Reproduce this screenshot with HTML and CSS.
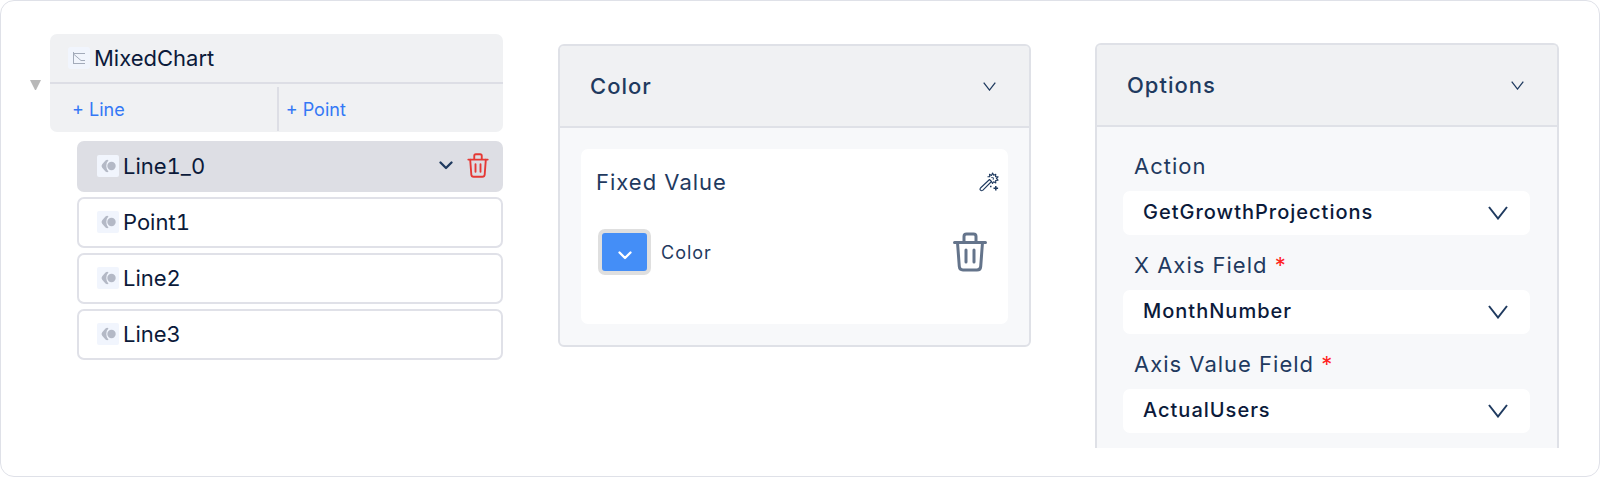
FILE: index.html
```
<!DOCTYPE html>
<html lang="en">
<head>
    <meta charset="UTF-8">
    <meta name="viewport" content="width=device-width, initial-scale=1.0">
    <title>Mixed Chart Settings</title>
    <link rel="stylesheet" href="styles.css">
</head>
<body>
    <!-- shared icons -->
    <svg class="icon-defs" aria-hidden="true">
        <symbol id="icon-series" viewBox="0 0 22 22">
            <path d="M11.500 5.200Q10 4.300 8.500 5.600L5.200 9.200Q3.800 11 5.200 12.800L8.500 16.400Q10 17.700 11.500 16.800Q9.300 14.500 9.300 11T11.500 5.200z" fill="#b4b9c6"/>
            <circle cx="14.500" cy="11" r="4.200" fill="#b4b9c6"/>
        </symbol>
        <symbol id="icon-chevron" viewBox="0 0 20 14">
            <path d="M1 1l9 11.500L19 1" fill="none" stroke="currentColor" stroke-width="2"/>
        </symbol>
        <symbol id="icon-chevron-round" viewBox="0 0 14 9">
            <path d="M1.500 1.500 7 7l5.500-5.500" fill="none" stroke="currentColor" stroke-width="2.300" stroke-linecap="round" stroke-linejoin="round"/>
        </symbol>
        <symbol id="icon-trash" viewBox="0 0 34 40">
            <path d="M1.500 10.500h31M11 10V4.500Q11 2 13.500 2h7Q23 2 23 4.500V10M4.500 10.500l1.800 24Q6.600 38 10 38h14q3.400 0 3.700-3.500L29.500 10.500M13 18v12M21 18v12" fill="none" stroke="currentColor" stroke-width="3" stroke-linecap="round"/>
        </symbol>
    </svg>

    <main class="frame">
        <section class="tree">
            <button class="toggle" aria-label="Collapse"><span class="toggle-arrow"></span></button>
            <div class="tree-content">
                <div class="chart-card">
                    <div class="chart-title">
                        <svg class="icon-box" viewBox="0 0 22 22">
                            <rect width="22" height="22" rx="2" fill="#f1f5fd"/>
                            <path d="M5.500 5v12M5 6.500h12M5 16.500h12M5.500 7l7.500 6.500h4" fill="none" stroke="#a3abba" stroke-width="1"/>
                        </svg>
                        <span>MixedChart</span>
                    </div>
                    <div class="chart-actions">
                        <button class="add-button">+ Line</button>
                        <button class="add-button">+ Point</button>
                    </div>
                </div>
                <ul class="series-list">
                    <li class="series selected">
                        <svg class="icon-box icon-series"><use href="#icon-series"/></svg>
                        <span class="series-name">Line1_0</span>
                        <button class="icon-button" aria-label="More"><svg class="series-chevron"><use href="#icon-chevron-round"/></svg></button>
                        <button class="icon-button delete" aria-label="Delete Line1_0"><svg class="series-trash"><use href="#icon-trash"/></svg></button>
                    </li>
                    <li class="series">
                        <svg class="icon-box icon-series"><use href="#icon-series"/></svg>
                        <span class="series-name">Point1</span>
                    </li>
                    <li class="series">
                        <svg class="icon-box icon-series"><use href="#icon-series"/></svg>
                        <span class="series-name">Line2</span>
                    </li>
                    <li class="series">
                        <svg class="icon-box icon-series"><use href="#icon-series"/></svg>
                        <span class="series-name">Line3</span>
                    </li>
                </ul>
            </div>
        </section>

        <section class="panel color-panel">
            <header class="panel-header">
                <h2>Color</h2>
                <button class="icon-button" aria-label="Collapse Color"><svg class="header-chevron"><use href="#icon-chevron"/></svg></button>
            </header>
            <div class="panel-body">
                <div class="value-card">
                    <div class="value-header">
                        <h3>Fixed Value</h3>
                        <button class="icon-button" aria-label="Edit expression">
                            <svg class="wand" viewBox="0 0 20 20" fill="none" stroke="currentColor" stroke-linejoin="round">
                                <path d="M10.500 7.500 1.500 16q-1 1.200 0 2.200t2.200.2L12.500 9.500z" stroke-width="1.100"/>
                                <path d="M8.500 4.800l2.300-.2-.3-2.300 2 1.100L13.600 1l1.100 2.300 2.100-1-.3 2.300 2.600.3-1.700 1.600 1.700 1.700-2.500.3.200 2.400-2.100-1.100-1.200 1.700-1-2" stroke-width="1.100"/>
                                <path d="M12.300 5.500l2.200.3-.3 2" stroke-width=".9"/>
                                <path d="M16.800 14v4.500M14.500 16.200h4.600" stroke-width="1.500"/>
                                <path d="M11 14.500h1.500" stroke-width="1.300"/>
                            </svg>
                        </button>
                    </div>
                    <div class="value-row">
                        <button class="swatch" id="swatch" aria-labelledby="swatch-label"><svg class="swatch-chevron"><use href="#icon-chevron-round"/></svg></button>
                        <label class="swatch-label" id="swatch-label" for="swatch">Color</label>
                        <button class="icon-button" aria-label="Delete color"><svg class="value-trash"><use href="#icon-trash"/></svg></button>
                    </div>
                </div>
            </div>
        </section>

        <section class="panel options-panel">
            <header class="panel-header">
                <h2>Options</h2>
                <button class="icon-button" aria-label="Collapse Options"><svg class="header-chevron"><use href="#icon-chevron"/></svg></button>
            </header>
            <form class="options-form">
                <div class="field">
                    <label for="action">Action</label>
                    <div class="select-box">
                        <select id="action"><option>GetGrowthProjections</option></select>
                        <svg class="select-chevron"><use href="#icon-chevron"/></svg>
                    </div>
                </div>
                <div class="field">
                    <label for="x-axis">X Axis Field <span class="required">*</span></label>
                    <div class="select-box">
                        <select id="x-axis"><option>MonthNumber</option></select>
                        <svg class="select-chevron"><use href="#icon-chevron"/></svg>
                    </div>
                </div>
                <div class="field">
                    <label for="axis-value">Axis Value Field <span class="required">*</span></label>
                    <div class="select-box">
                        <select id="axis-value"><option>ActualUsers</option></select>
                        <svg class="select-chevron"><use href="#icon-chevron"/></svg>
                    </div>
                </div>
            </form>
        </section>
    </main>
</body>
</html>
```
FILE: styles.css
```
* {
    box-sizing: border-box;
}

body {
    margin: 0;
    background: white;
    color: #0b1a3a;
    font-family: Inter, sans-serif;
    font-size: 22px;
}

h2, h3, ul {
    margin: 0;
    padding: 0;
    font-weight: 400;
    font-size: 22px;
}

button, select {
    font-family: inherit;
    color: inherit;
    border: none;
    background: none;
    padding: 0;
    cursor: pointer;
}

svg {
    display: block;
    flex-shrink: 0;
}

.icon-defs {
    display: none;
}

.frame {
    display: grid;
    grid-template-columns: repeat(3, 1fr);
    align-items: start;
    gap: 55px;
    min-height: 100vh;
    padding: 33px 40px 28px 29px;
    border: 1px solid #dfe1e8;
    border-radius: 14px;
}

/* component tree */

.tree {
    display: flex;
    align-items: flex-start;
    gap: 9px;
}

.toggle {
    margin-top: 46px;
}

.toggle-arrow {
    display: block;
    border: solid transparent;
    border-width: 10px 5px 0;
    border-top-color: #b8b8b8;
    width: 11px;
}

.tree-content {
    flex: 1;
}

.chart-card {
    background: #f0f1f3;
    border-radius: 7px;
}

.chart-title {
    display: flex;
    align-items: center;
    gap: 4px;
    height: 50px;
    padding-left: 18px;
    border-bottom: 2px solid #dddee5;
}

.icon-box {
    width: 22px;
    height: 22px;
    border-radius: 2px;
}

.chart-actions {
    display: grid;
    grid-template-columns: 51fr 50fr;
    padding: 3px 0 1px;
}

.add-button {
    height: 44px;
    padding-left: 7px;
    color: #3478f6;
    font-size: 18px;
    text-align: left;
}

.add-button:first-child {
    padding-left: 22px;
    border-right: 2px solid #dddee5;
}

.series-list {
    display: flex;
    flex-direction: column;
    gap: 5px;
    margin: 9px 0 0 27px;
    list-style: none;
}

.series {
    display: flex;
    align-items: center;
    gap: 4px;
    height: 51px;
    padding: 0 12px 2px 18px;
    border: 2px solid #e0e1e8;
    border-radius: 7px;
    font-feature-settings: "tnum";
}

.series.selected {
    background: #dddee4;
    border-color: #dddee4;
}

.series-name {
    flex: 1;
}

.icon-series {
    background: #f1f5fd;
}

.series-chevron {
    width: 14px;
    height: 9px;
    margin-right: 10px;
    color: #1f3a5f;
}

.series-trash {
    width: 22px;
    height: 25px;
}

.delete {
    color: #e53935;
}

/* settings panels */

.panel {
    border: 2px solid #dfe1e7;
    border-radius: 6px;
    background: #f7f8fa;
    color: #1f3a5f;
    letter-spacing: 1px;
}

.color-panel {
    margin-top: 10px;
}

.options-panel {
    margin: 9px 0 0 9px;
    border-bottom: none;
    border-radius: 6px 6px 0 0;
}

.panel-header {
    display: flex;
    align-items: center;
    justify-content: space-between;
    height: 82px;
    padding: 0 33px 0 30px;
    border-bottom: 2px solid #dfe1e7;
    border-radius: 4px 4px 0 0;
    background: #f0f1f3;
}

.panel-header h2 {
    font-weight: 450;
}

.header-chevron {
    width: 13px;
    height: 9px;
}

.panel-body {
    padding: 21px;
}

.value-card {
    height: 175px;
    padding: 15px 9px 0 15px;
    border-radius: 7px;
    background: white;
}

.value-header {
    display: flex;
    align-items: center;
    justify-content: space-between;
    height: 36px;
}

.wand {
    width: 20px;
    height: 20px;
}

.value-row {
    display: flex;
    align-items: center;
    margin-top: 29px;
    padding: 0 12px 0 2px;
}

.swatch {
    display: flex;
    align-items: center;
    justify-content: center;
    width: 53px;
    height: 46px;
    padding-top: 6px;
    border: 4px solid #dfdfdf;
    border-radius: 7px;
    background: #448ef7;
    color: white;
}

.swatch-chevron {
    width: 14px;
    height: 9px;
}

.swatch-label {
    flex: 1;
    margin-left: 10px;
    font-size: 18px;
}

.value-trash {
    width: 34px;
    height: 40px;
    color: #64748b;
}

.options-form {
    display: flex;
    flex-direction: column;
    gap: 11px;
    padding: 20px 27px 15px 26px;
}

.field label {
    display: block;
    height: 44px;
    padding-left: 11px;
    line-height: 38px;
    font-weight: 400;
}

.required {
    color: #ff1f1f;
}

.select-box {
    display: grid;
    align-items: center;
}

.select-box select,
.select-chevron {
    grid-area: 1 / 1;
}

.select-box select {
    appearance: none;
    width: 100%;
    height: 44px;
    padding: 0 60px 3px 20px;
    border-radius: 7px;
    background: white;
    color: #0b1a3a;
    font-size: 20px;
    font-weight: 500;
    letter-spacing: 1px;
}

.select-chevron {
    justify-self: end;
    width: 20px;
    height: 14px;
    margin-right: 22px;
    pointer-events: none;
}
```
